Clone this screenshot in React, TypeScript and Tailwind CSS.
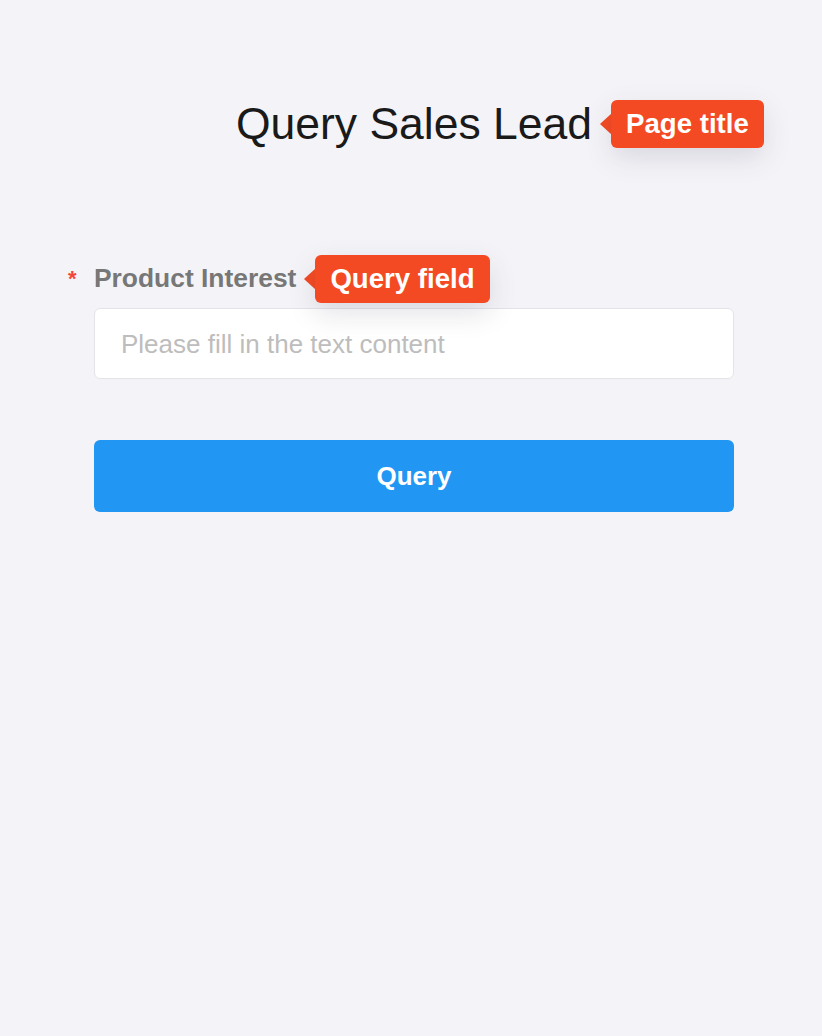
import React from "react";

function Tip({ text, offset = "" }: { text: string; offset?: string }) {
  return (
    <div className={"absolute left-full top-1/2 -translate-y-1/2 ml-[8px] flex items-center z-10 " + offset}>
      <div className="w-0 h-0 border-y-[11px] border-y-transparent border-r-[12px] border-r-[#f44a24] -mr-[1px]" />
      <div className="bg-[#f44a24] text-white font-bold text-[27.6px] leading-[48px] h-[48px] px-[15px] rounded-[6px] whitespace-nowrap shadow-[0_10px_28px_rgba(30,30,60,0.13)]">
        {text}
      </div>
    </div>
  );
}

export default function App() {
  return (
    <div
      className="min-h-screen w-full bg-[#f4f4f8]"
      style={{ fontFamily: '"Liberation Sans", Arial, Helvetica, sans-serif' }}
    >
      <div className="pl-[94px] pr-[88px] pt-[98px]">
        <div className="flex justify-center">
          <h1 className="relative text-[44.5px] leading-[52px] text-[#1a1a1a] font-normal whitespace-nowrap">
            Query Sales Lead
            <Tip text="Page title" />
          </h1>
        </div>

        <div className="mt-[112px] flex">
          <label className="relative text-[26.4px] leading-[32px] font-bold text-[#777777] whitespace-nowrap">
            <span className="absolute left-[-26px] top-[1px] text-[#f5443a] font-bold text-[22px]">*</span>
            Product Interest
            <Tip text="Query field" offset="mt-[1px]" />
          </label>
        </div>

        <input
          type="text"
          placeholder="Please fill in the text content"
          className="mt-[14px] block w-full h-[71px] bg-white border border-[#e4e4e8] rounded-[6px] pl-[26px] pt-[2px] text-[26px] text-[#333] placeholder:text-[#bdbdbd] outline-none"
        />

        <button className="mt-[61px] w-full h-[72px] bg-[#2196f3] rounded-[6px] text-white font-bold text-[26px]">
          Query
        </button>
      </div>
    </div>
  );
}
